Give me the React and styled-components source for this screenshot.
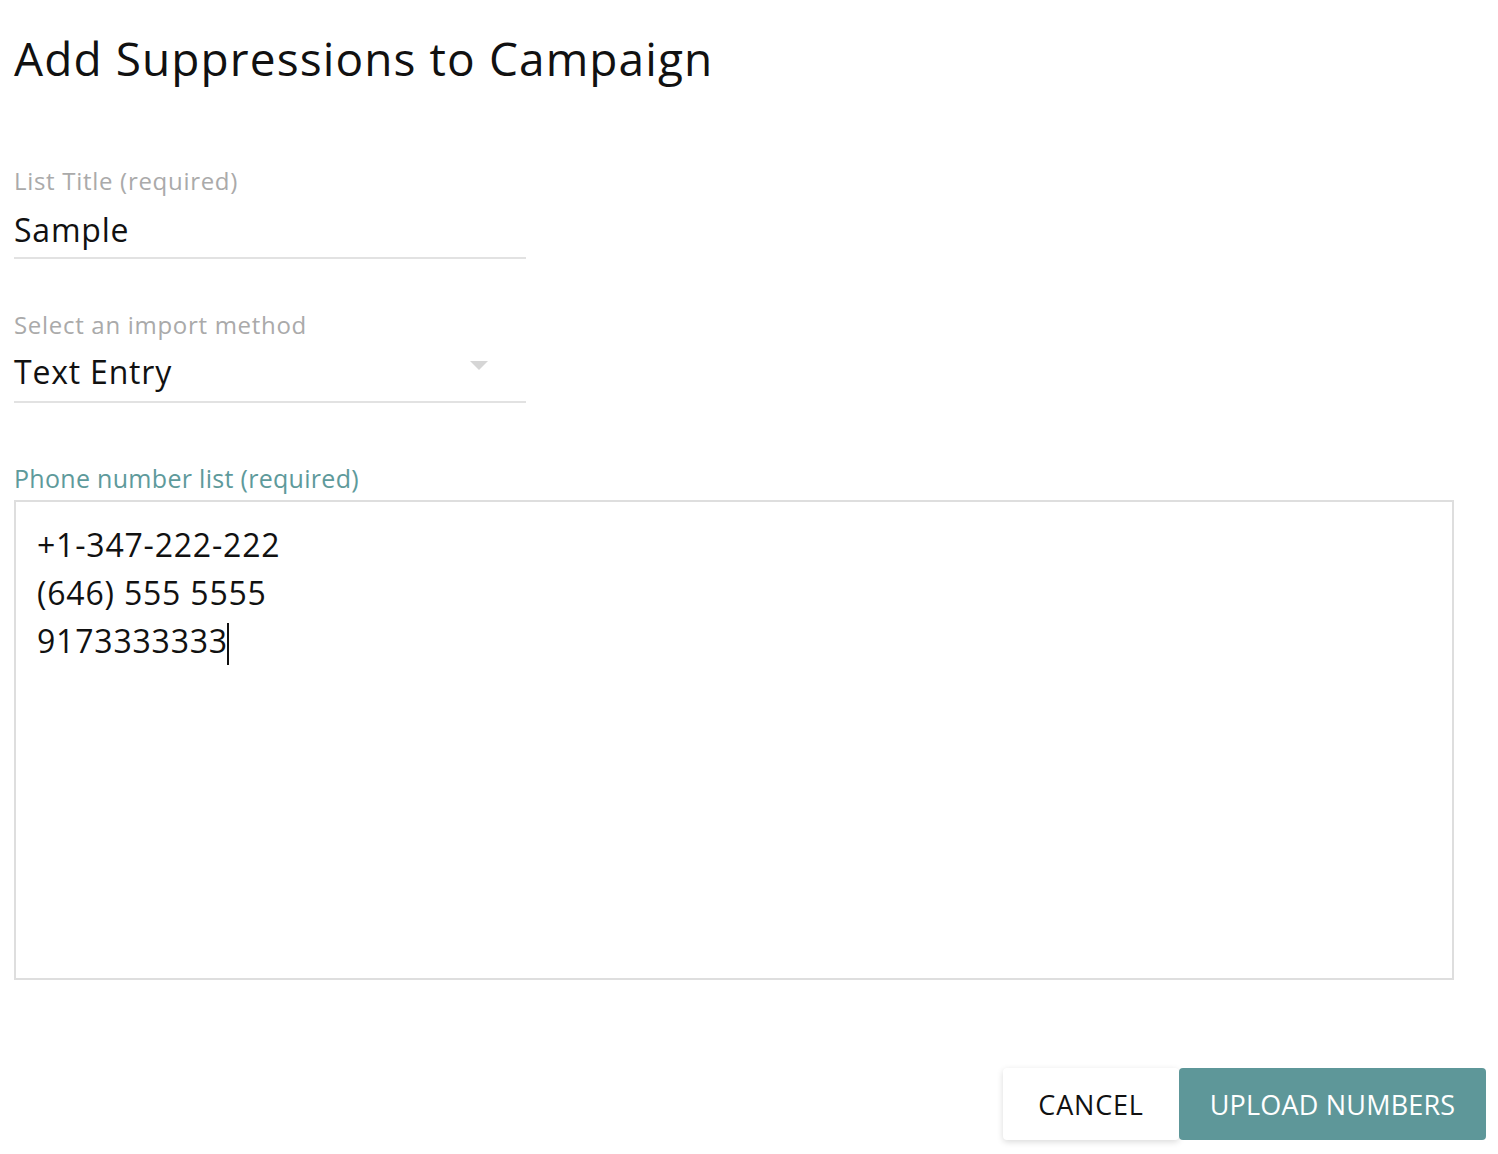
import React from 'react'
import styled, { createGlobalStyle } from 'styled-components'

const GlobalStyle = createGlobalStyle`
    body {
        margin: 0;
        background: #fff;
        font-family: "Open Sans", "Liberation Sans", sans-serif;
        color: #111;
    }
`

function App() {
    return (
        <Page>
            <GlobalStyle />
            <Title>Add Suppressions to Campaign</Title>

            <Field top="79px">
                <Label>List Title (required)</Label>
                <Value gap="11px">Sample</Value>
            </Field>

            <Field top="52px">
                <Label>Select an import method</Label>
                <SelectRow>
                    <Value gap="7px">Text Entry</Value>
                    <Arrow />
                </SelectRow>
            </Field>

            <AreaLabel>Phone number list (required)</AreaLabel>
            <TextBox>
                <div>+1-347-222-222</div>
                <div>(646) 555 5555</div>
                <div>9173333333<Caret /></div>
            </TextBox>

            <Actions>
                <Button width="176px">CANCEL</Button>
                <Button width="307px" primary>UPLOAD NUMBERS</Button>
            </Actions>
        </Page>
    )
}

export default App

const Page = styled.div`
    width: 1498px;
    height: 1154px;
    padding: 28px 12px 0 14px;
    box-sizing: border-box;
    display: flex;
    flex-direction: column;
`

const Title = styled.h1`
    margin: 0;
    font-size: 46px;
    font-weight: 400;
    line-height: 60px;
    letter-spacing: 1.1px;
    color: #111;
`

const Field = styled.div`
    width: 512px;
    margin-top: ${props => props.top};
    border-bottom: 2px solid #e2e2e2;
    padding-bottom: 3px;
`

const Label = styled.div`
    font-size: 24px;
    line-height: 28px;
    letter-spacing: 0.7px;
    color: #aaa;
`

const Value = styled.div`
    margin-top: ${props => props.gap};
    font-size: 32px;
    line-height: ${props => props.gap === '7px' ? '52px' : '48px'};
    letter-spacing: 0.8px;
    color: #111;
`

const SelectRow = styled.div`
    display: flex;
    align-items: center;
    justify-content: space-between;
    padding-right: 38px;
`

const Arrow = styled.span`
    width: 0;
    height: 0;
    margin-bottom: 6px;
    border-left: 9px solid transparent;
    border-right: 9px solid transparent;
    border-top: 9px solid #d6d6d6;
`

const AreaLabel = styled.div`
    margin-top: 59px;
    font-size: 25px;
    line-height: 32px;
    letter-spacing: 0.3px;
    color: #5e9a9b;
`

const TextBox = styled.div`
    margin-top: 6px;
    width: 1440px;
    height: 480px;
    box-sizing: border-box;
    border: 2px solid #dedede;
    padding: 19px 21px;
    font-size: 32px;
    line-height: 48px;
    letter-spacing: 0.8px;
    color: #111;
`

const Caret = styled.span`
    display: inline-block;
    width: 2px;
    height: 42px;
    margin-left: -1px;
    background: #111;
    vertical-align: middle;
`

const Actions = styled.div`
    display: flex;
    justify-content: flex-end;
    margin-top: 88px;
`

const Button = styled.button`
    width: ${props => props.width};
    height: 72px;
    padding: 0;
    border: none;
    border-radius: 4px;
    font-family: inherit;
    font-size: 27px;
    letter-spacing: ${props => props.primary ? '0.2px' : '0.8px'};
    background: ${props => props.primary ? '#5e9799' : '#fff'};
    color: ${props => props.primary ? '#fff' : '#111'};
    box-shadow: ${props => props.primary ? 'none' : '0 2px 6px rgba(0,0,0,0.15)'};
`
